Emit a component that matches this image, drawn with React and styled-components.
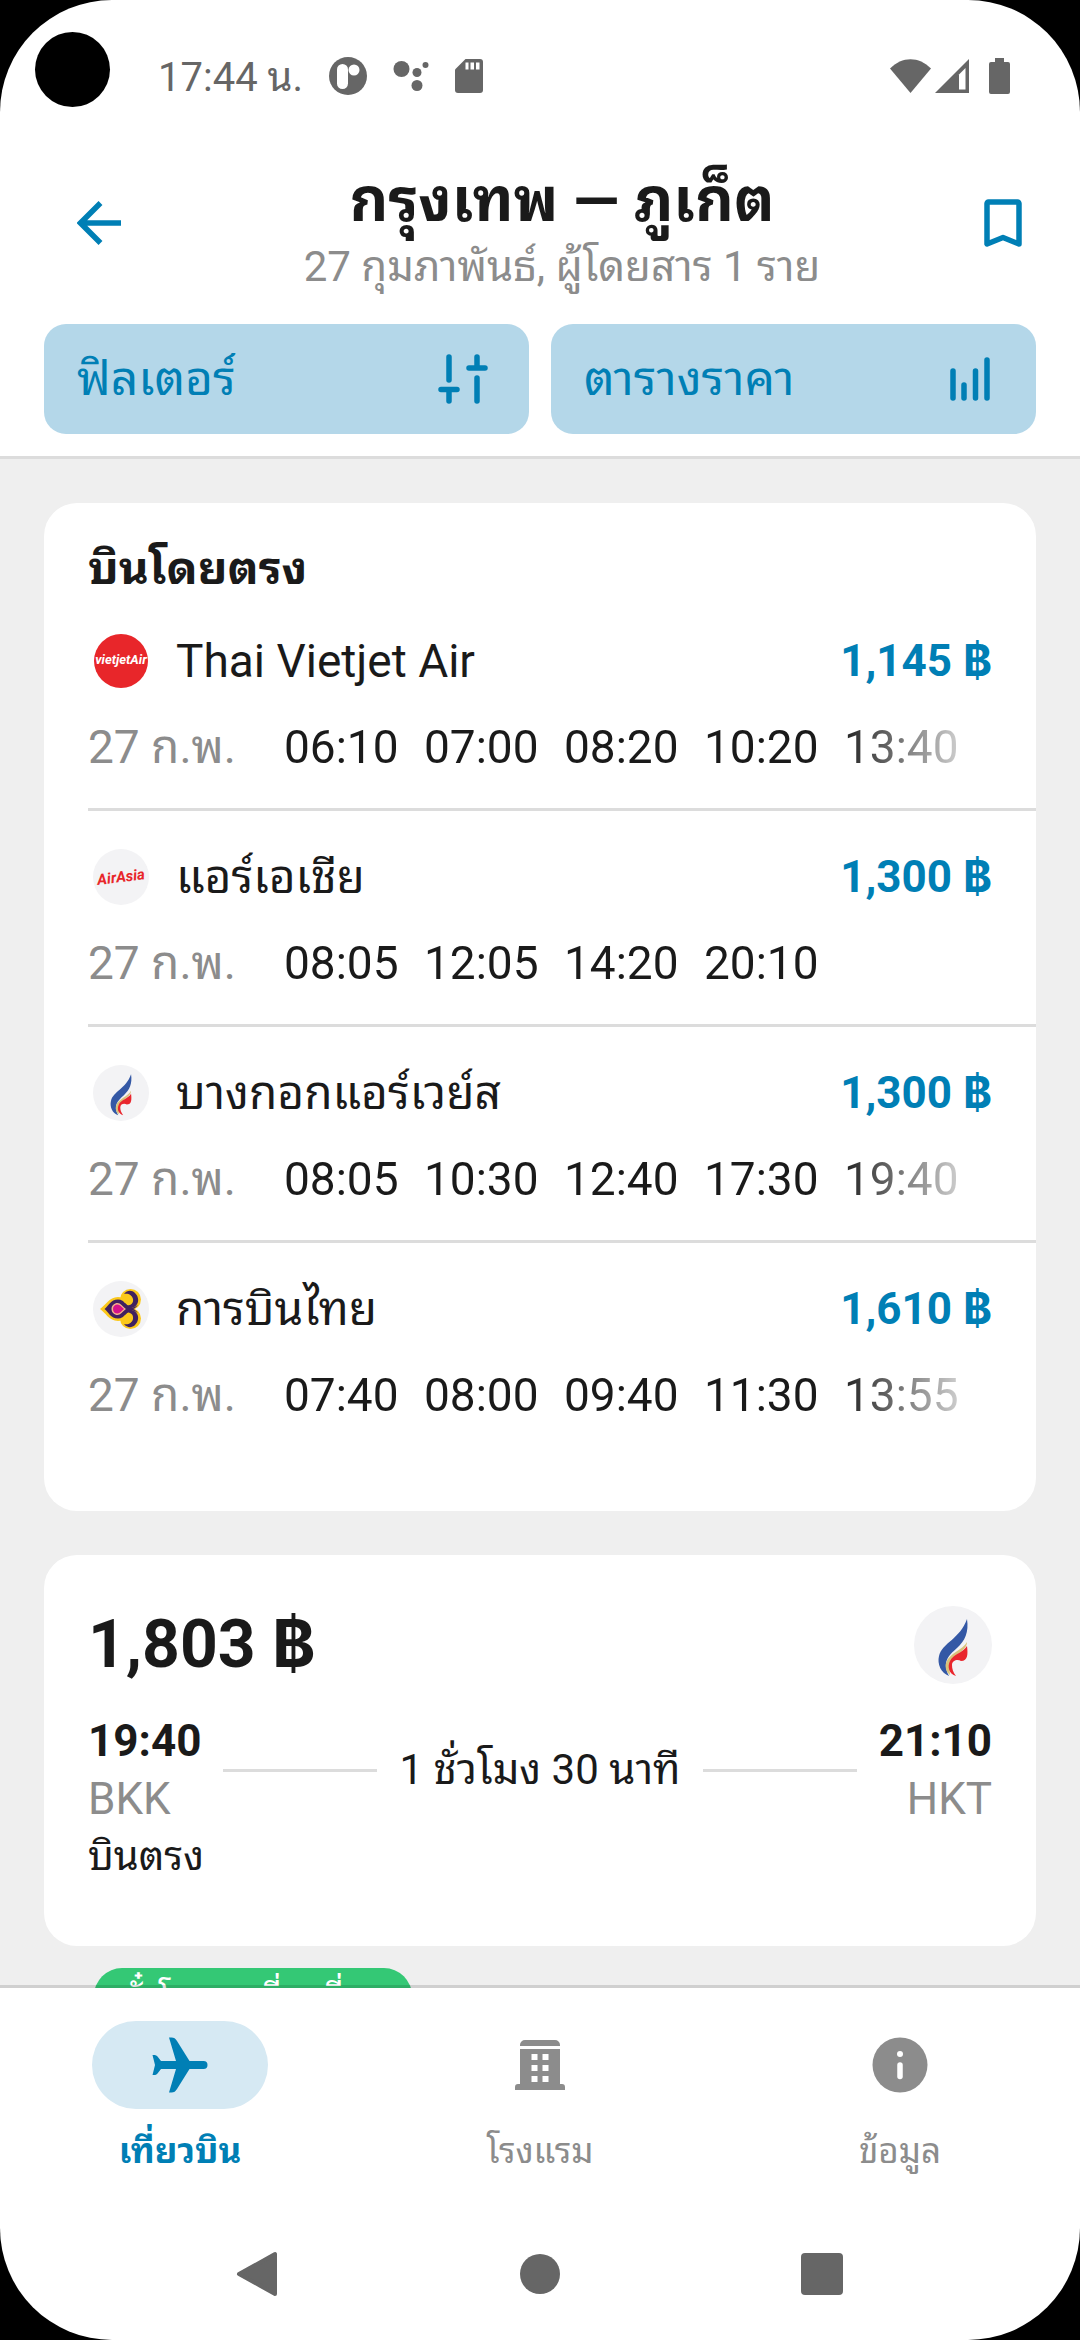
import React from "react";
import styled, { createGlobalStyle } from "styled-components";

const color = {
  blue: "#007fb5",
  blueSoft: "#b4d7e9",
  bluePale: "#d6e9f3",
  ink: "#1a1a1a",
  grey: "#8c8c8c",
  system: "#666666",
  line: "#dcdcdc",
  page: "#efefef",
  green: "#34c875",
};

const GlobalStyle = createGlobalStyle`
  * { box-sizing: border-box; }
  body {
    margin: 0;
    background: #000;
    color: ${color.ink};
    font-family: Roboto, "Noto Sans Thai Looped", Loma, Waree, Garuda, "Noto Sans Thai", "Noto Sans", sans-serif;
    font-size: 46px;
    line-height: 66px;
  }
  button {
    padding: 0;
    border: 0;
    background: none;
    color: inherit;
    font: inherit;
    cursor: pointer;
  }
  h1, h2, p, ul { margin: 0; padding: 0; }
  ul { list-style: none; }
  svg { display: block; flex: none; }
`;

const Screen = styled.div`
  position: relative;
  display: flex;
  flex-direction: column;
  height: 100vh;
  overflow: hidden;
  border-radius: 112px;
  background: #fff;
`;

const Camera = styled.span`
  position: absolute;
  top: 32px;
  left: 35px;
  width: 75px;
  height: 75px;
  border-radius: 50%;
  background: #000;
`;

const StatusBar = styled.div`
  display: flex;
  flex: none;
  align-items: center;
  justify-content: space-between;
  height: 152px;
  padding: 0 70px 0 158px;
  color: ${color.system};
`;

const StatusGroup = styled.div`
  display: flex;
  align-items: center;
  gap: ${(p) => p.$gap}px;
`;

const Clock = styled.time`
  padding-top: 4px;
  font-size: 40px;
`;

const BatterySlot = styled.span`
  padding-left: 16px;
`;

const Header = styled.header`
  flex: none;
  padding: 16px 44px 22px;
  border-bottom: 3px solid ${color.line};
`;

const TitleRow = styled.div`
  display: flex;
  align-items: flex-start;
`;

const IconButton = styled.button`
  display: flex;
  flex: none;
  align-items: center;
  justify-content: center;
  width: ${(p) => p.$width}px;
  height: 110px;
  color: ${color.blue};
`;

const TitleBlock = styled.div`
  flex: 1;
  text-align: center;
`;

const Title = styled.h1`
  font-size: 60px;
  font-weight: 700;
  line-height: 66px;
`;

const Subtitle = styled.p`
  color: ${color.grey};
  font-size: 42px;
`;

const Actions = styled.div`
  display: grid;
  grid-template-columns: 1fr 1fr;
  gap: 22px;
  margin-top: 24px;
`;

const ActionButton = styled.button`
  && {
    display: flex;
    align-items: center;
    justify-content: space-between;
    height: 110px;
    padding: 0 33px;
    border-radius: 22px;
    background: ${color.blueSoft};
    color: ${color.blue};
    font-size: 48px;
  }
`;

const Results = styled.main`
  display: flex;
  flex: 1;
  flex-direction: column;
  gap: 44px;
  min-height: 0;
  padding: 44px 44px 0;
  overflow: hidden;
  background: ${color.page};
`;

const Card = styled.section`
  flex: none;
  border-radius: 33px;
  background: #fff;
`;

const DirectCard = styled(Card)`
  padding: 38px 0 55px 44px;
`;

const CardHeading = styled.h2`
  font-size: 46px;
  font-weight: 700;
  line-height: 54px;
`;

const AirlineItem = styled.li`
  display: flex;
  flex-direction: column;
  gap: 20px;
  padding: 33px 44px 28px 0;

  & + & {
    border-top: 3px solid ${color.line};
  }
`;

const AirlineRow = styled.div`
  display: flex;
  align-items: center;
  gap: 22px;
`;

const LogoSlot = styled.span`
  display: flex;
  justify-content: center;
  width: 66px;
`;

const AirlineName = styled.span`
  flex: 1;
`;

const Price = styled.strong`
  font-family: Roboto, Inter, "Noto Sans", sans-serif;
  font-weight: 700;
`;

const AirlinePrice = styled(Price)`
  color: ${color.blue};
  font-size: 44px;
`;

const ScheduleRow = styled.div`
  display: flex;
`;

const ScheduleDate = styled.span`
  flex: none;
  width: 196px;
  color: ${color.grey};
`;

const Departures = styled.ul`
  display: flex;
  flex: 1;
  gap: 24px;
  overflow: hidden;
  mask-image: linear-gradient(to left, transparent, #000 154px);
`;

const Departure = styled.li`
  flex: none;
  width: 116px;
`;

const TicketCard = styled(Card)`
  padding: 44px 44px 60px;
`;

const TicketTop = styled.div`
  display: flex;
  align-items: center;
  justify-content: space-between;
  height: 92px;
`;

const TicketPrice = styled(Price)`
  font-size: 66px;
`;

const Route = styled.div`
  display: flex;
  align-items: center;
  gap: 22px;
  margin-top: 21px;
  line-height: 58px;
`;

const Stop = styled.div`
  display: flex;
  flex-direction: column;
  text-align: ${(p) => p.$align};
`;

const StopTime = styled.strong`
  font-size: 44px;
  font-weight: 700;
`;

const StopCode = styled.span`
  color: ${color.grey};
  font-size: 44px;
`;

const RouteLine = styled.span`
  flex: 1;
  height: 3px;
  background: ${color.line};
`;

const Duration = styled.span`
  font-size: 42px;
`;

const Transfers = styled.p`
  font-size: 40px;
  line-height: 58px;
`;

const BadgedCard = styled(Card)`
  position: relative;
  height: 392px;
`;

const Badge = styled.span`
  position: absolute;
  top: -22px;
  left: 50px;
  padding: 0 28px;
  border-radius: 28px;
  background: ${color.green};
  color: #fff;
  font-size: 33px;
  line-height: 58px;
  white-space: nowrap;
`;

const TabBar = styled.nav`
  position: relative;
  display: grid;
  flex: none;
  grid-template-columns: repeat(3, 1fr);
  margin-top: -3px;
  padding: 33px 0 34px;
  border-top: 3px solid rgba(0, 0, 0, 0.13);
  background: #fff;
  background-clip: padding-box;
`;

const Tab = styled.button`
  && {
    display: flex;
    flex-direction: column;
    align-items: center;
    gap: 21px;
    color: ${(p) => (p.$active ? color.blue : color.grey)};
    font-size: 35px;
    font-weight: ${(p) => (p.$active ? 700 : 400)};
    line-height: 44px;
  }
`;

const TabPill = styled.span`
  display: flex;
  align-items: center;
  justify-content: center;
  width: 176px;
  height: 88px;
  border-radius: 44px;
  background: ${(p) => (p.$active ? color.bluePale : "transparent")};
`;

const SystemNav = styled.div`
  display: flex;
  flex: none;
  align-items: center;
  justify-content: center;
  gap: 216px;
  height: 132px;
  color: ${color.system};
`;

const SystemButton = styled.button`
  display: flex;
  align-items: center;
  justify-content: center;
  width: 66px;
  height: 66px;
`;

const AppBadgeIcon = () => (
  <svg width="38" height="38" viewBox="0 0 38 38">
    <circle cx="19" cy="19" r="19" fill="currentColor" />
    <rect x="8" y="7" width="11" height="25" rx="5.5" fill="#fff" />
    <circle cx="25" cy="13" r="5.5" fill="#fff" />
  </svg>
);

const DotsIcon = () => (
  <svg width="36" height="36" viewBox="0 0 36 36" fill="currentColor">
    <circle cx="8.5" cy="11" r="8" />
    <circle cx="24" cy="14.5" r="4.5" />
    <circle cx="32.5" cy="7" r="3" />
    <circle cx="24" cy="27.5" r="5.5" />
  </svg>
);

const SdCardIcon = () => (
  <svg width="28" height="34" viewBox="0 0 28 34">
    <path
      d="M10.500 0H25a3 3 0 0 1 3 3v28a3 3 0 0 1-3 3H3a3 3 0 0 1-3-3V10.500Z"
      fill="currentColor"
    />
    <path d="M10.500 3.500h3v7h-3zM15.500 3.500h3.500v7h-3.500zM21 3.500h3.500v7H21z" fill="#fff" />
  </svg>
);

const WifiIcon = () => (
  <svg width="41" height="34" viewBox="0 0 41 34">
    <path d="M0 9.500C12-3 29-3 41 9.500L20.500 34Z" fill="currentColor" />
  </svg>
);

const SignalIcon = () => (
  <svg width="34" height="34" viewBox="0 0 34 34">
    <path d="M34 0v34H0Z" fill="currentColor" />
    <path d="M30.500 9v21.500H24V15.500Z" fill="#fff" />
  </svg>
);

const BatteryIcon = () => (
  <svg width="21" height="36" viewBox="0 0 21 36">
    <path
      d="M6 0h9v4h4a2 2 0 0 1 2 2v28a2 2 0 0 1-2 2H2a2 2 0 0 1-2-2V6a2 2 0 0 1 2-2h4Z"
      fill="currentColor"
    />
  </svg>
);

const BackIcon = () => (
  <svg width="44" height="44" viewBox="0 0 44 44" fill="none" stroke="currentColor" strokeWidth="5.5">
    <path d="M44 22H5M23.500 2 3.500 22l20 20" />
  </svg>
);

const BookmarkIcon = () => (
  <svg width="40" height="50" viewBox="0 0 40 50" fill="none" stroke="currentColor" strokeWidth="5.5" strokeLinejoin="round">
    <path d="M5.500 4h29a1.500 1.500 0 0 1 1.500 1.500V46L20 39.500 4 46V5.500A1.500 1.500 0 0 1 5.500 4Z" />
  </svg>
);

const FilterIcon = () => (
  <svg width="66" height="66" viewBox="0 0 66 66" fill="none" stroke="currentColor" strokeWidth="5.5" strokeLinecap="round">
    <path d="M19 11v23M11 43.500h16M19 44v11M47 11v11M39 22h16M47 32v23" />
  </svg>
);

const ChartIcon = () => (
  <svg width="66" height="66" viewBox="0 0 66 66" fill="none" stroke="currentColor" strokeWidth="5.5" strokeLinecap="round">
    <path d="M16 25v27M27 39v13M38.500 25v27M50 14v38" />
  </svg>
);

const PlaneIcon = () => (
  <svg width="56" height="56" viewBox="0 0 56 56" fill="currentColor">
    <path d="M17 0.500h2.500C22 0.500 23.500 1.500 25 4l12.500 20H51.500a4 4 0 0 1 0 8H37.500L25 52c-1.500 2.500-3 3.500-5.500 3.500H17L24 32H9l-3.500 4.500C4.500 37.500 3.500 38 2 38H0.500L3 28 0.500 18H2c1.500 0 2.500 0.500 3.500 1.500L9 24h15Z" />
  </svg>
);

const HotelIcon = () => (
  <svg width="50" height="50" viewBox="0 0 50 50">
    <path
      d="M10 0h30a5 5 0 0 1 5 5v39h2a3 3 0 0 1 3 3v3H0v-3a3 3 0 0 1 3-3h2V5a5 5 0 0 1 5-5Z"
      fill="currentColor"
    />
    <path
      d="M5 6h40v3H5zM16.500 14h6v6h-6zM27.500 14h6v6h-6zM16.500 25h6v6h-6zM27.500 25h6v6h-6zM16.500 36h6v6h-6zM27.500 36h6v6h-6z"
      fill="#fff"
    />
  </svg>
);

const InfoIcon = () => (
  <svg width="56" height="56" viewBox="0 0 56 56">
    <circle cx="28" cy="28" r="27.5" fill="currentColor" />
    <circle cx="28" cy="17" r="3" fill="#fff" />
    <path d="M28 28v11.500" stroke="#fff" strokeWidth="5.5" strokeLinecap="round" />
  </svg>
);

const VietjetLogo = () => (
  <svg width="56" height="56" viewBox="0 0 56 56" role="img" aria-label="Vietjet Air">
    <circle cx="28" cy="28" r="27" fill="#e8262a" />
    <text x="28" y="31" textAnchor="middle" fontFamily="Roboto, sans-serif" fontSize="13" fontWeight="700" fontStyle="italic" fill="#fff">
      vietjetAir
    </text>
  </svg>
);

const AirAsiaLogo = () => (
  <svg width="56" height="56" viewBox="0 0 56 56" role="img" aria-label="AirAsia">
    <circle cx="28" cy="28" r="28" fill="#f3f3f5" />
    <text x="28" y="33" textAnchor="middle" transform="rotate(-7 28 28)" fontFamily="Roboto, sans-serif" fontSize="15" fontWeight="700" fontStyle="italic" fill="#e8262a">
      AirAsia
    </text>
  </svg>
);

const BangkokAirwaysLogo = ({ size = 56 }) => (
  <svg width={size} height={size} viewBox="0 0 78 78" role="img" aria-label="Bangkok Airways">
    <circle cx="39" cy="39" r="39" fill="#f3f3f5" />
    <path d="M53 13c2 13-2 22-10 29-9 8-15 14-8 28C27 67 23 58 25 50c3-13 21-17 28-37Z" fill="#3458a5" />
    <path d="M53 36c-4 8-18 11-21 21-1 4 0 9 4 12-1-11 1-16 8-21 5-4 9-7 9-12Z" fill="#d9c27a" />
    <path d="M53 40c1 8 1 15-6 15-3-2-9-1-9 4 0 4 1 7 4 11-7-2-9-9-6-15 3-7 13-8 17-15Z" fill="#e9262d" />
  </svg>
);

const ThaiAirwaysLogo = () => (
  <svg width="56" height="56" viewBox="0 0 56 56" role="img" aria-label="Thai Airways">
    <circle cx="28" cy="28" r="28" fill="#f3f3f5" />
    <g fill="#fbc81b">
      <circle cx="37.5" cy="18.5" r="10.5" />
      <circle cx="37.5" cy="37.5" r="10.5" />
      <path d="M7 28c5-3 9-12 18-12 6 0 11 6 15 12-4 6-9 12-15 12-9 0-13-9-18-12Z" />
    </g>
    <g fill="#40215f">
      <path d="M11.500 28c4-3 6-9.500 13.500-9.500 7 0 9 8 14 8 2 0 4-1 6-3-2 4-5 5-8 5h-5v-1c-3-1-4-4.500-7-4.500s-5 2-5 5 2 5 5 5 4-3.500 7-4.500v-1h5c3 0 6 1 8 5-2-2-4-3-6-3-5 0-7 8-14 8-7.500 0-9.500-6.500-13.500-9.500Z" />
      <path d="M31 13c3-4 8-4 11-1 6 6 3 15-5 15-4 0-6-1-8-4 6 3 12 1 11-5-1-4-5-6-9-5ZM31 43c3 4 8 4 11 1 6-6 3-15-5-15-4 0-6 1-8 4 6-3 12-1 11 5-1 4-5 6-9 5Z" />
    </g>
    <circle cx="34.5" cy="18" r="4.5" fill="#fbc81b" />
    <circle cx="34.5" cy="38" r="4.5" fill="#fbc81b" />
    <path d="M51 28 43 27.500v1Z" fill="#f3f3f5" />
    <path d="M18.500 28c0-3.500 3-6 6-6s5 3.500 8.500 6c-3.500 2.500-5.500 6-8.500 6s-6-2.500-6-6Z" fill="#f4b08a" />
    <path d="M20 28c0-3 2-4.500 4.500-4.500S28.500 26 31 28c-2.500 2-4 4.500-6.500 4.500S20 31 20 28Z" fill="#d6128a" />
  </svg>
);

const BackTriangleIcon = () => (
  <svg width="66" height="66" viewBox="0 0 66 66" fill="currentColor" stroke="currentColor" strokeWidth="4" strokeLinejoin="round">
    <path d="M50 13v40L14 33Z" />
  </svg>
);

const HomeCircleIcon = () => (
  <svg width="40" height="40" viewBox="0 0 40 40">
    <circle cx="20" cy="20" r="20" fill="currentColor" />
  </svg>
);

const RecentSquareIcon = () => (
  <svg width="42" height="42" viewBox="0 0 42 42">
    <rect width="42" height="42" rx="4" fill="currentColor" />
  </svg>
);

const airlines = [
  {
    name: "Thai Vietjet Air",
    price: "1,145 ฿",
    Logo: VietjetLogo,
    times: ["06:10", "07:00", "08:20", "10:20", "13:40"],
  },
  {
    name: "แอร์เอเชีย",
    price: "1,300 ฿",
    Logo: AirAsiaLogo,
    times: ["08:05", "12:05", "14:20", "20:10"],
  },
  {
    name: "บางกอกแอร์เวย์ส",
    price: "1,300 ฿",
    Logo: BangkokAirwaysLogo,
    times: ["08:05", "10:30", "12:40", "17:30", "19:40"],
  },
  {
    name: "การบินไทย",
    price: "1,610 ฿",
    Logo: ThaiAirwaysLogo,
    times: ["07:40", "08:00", "09:40", "11:30", "13:55"],
  },
];

const tabs = [
  { label: "เที่ยวบิน", Icon: PlaneIcon, active: true },
  { label: "โรงแรม", Icon: HotelIcon, active: false },
  { label: "ข้อมูล", Icon: InfoIcon, active: false },
];

export default function App() {
  return (
    <Screen lang="th">
      <GlobalStyle />
      <Camera />
      <StatusBar>
        <StatusGroup $gap={26}>
          <Clock>17:44 น.</Clock>
          <AppBadgeIcon />
          <DotsIcon />
          <SdCardIcon />
        </StatusGroup>
        <StatusGroup $gap={4}>
          <WifiIcon />
          <SignalIcon />
          <BatterySlot>
            <BatteryIcon />
          </BatterySlot>
        </StatusGroup>
      </StatusBar>

      <Header>
        <TitleRow>
          <IconButton $width={110} aria-label="ย้อนกลับ">
            <BackIcon />
          </IconButton>
          <TitleBlock>
            <Title>กรุงเทพ — ภูเก็ต</Title>
            <Subtitle>27 กุมภาพันธ์, ผู้โดยสาร 1 ราย</Subtitle>
          </TitleBlock>
          <IconButton $width={66} aria-label="บันทึก">
            <BookmarkIcon />
          </IconButton>
        </TitleRow>
        <Actions>
          <ActionButton>
            ฟิลเตอร์
            <FilterIcon />
          </ActionButton>
          <ActionButton>
            ตารางราคา
            <ChartIcon />
          </ActionButton>
        </Actions>
      </Header>

      <Results>
        <DirectCard>
          <CardHeading>บินโดยตรง</CardHeading>
          <ul>
            {airlines.map(({ name, price, Logo, times }) => (
              <AirlineItem key={name}>
                <AirlineRow>
                  <LogoSlot>
                    <Logo />
                  </LogoSlot>
                  <AirlineName>{name}</AirlineName>
                  <AirlinePrice>{price}</AirlinePrice>
                </AirlineRow>
                <ScheduleRow>
                  <ScheduleDate>27 ก.พ.</ScheduleDate>
                  <Departures>
                    {times.map((time) => (
                      <Departure key={time}>{time}</Departure>
                    ))}
                  </Departures>
                </ScheduleRow>
              </AirlineItem>
            ))}
          </ul>
        </DirectCard>

        <TicketCard>
          <TicketTop>
            <TicketPrice>1,803 ฿</TicketPrice>
            <BangkokAirwaysLogo size={78} />
          </TicketTop>
          <Route>
            <Stop $align="left">
              <StopTime>19:40</StopTime>
              <StopCode>BKK</StopCode>
            </Stop>
            <RouteLine />
            <Duration>1 ชั่วโมง 30 นาที</Duration>
            <RouteLine />
            <Stop $align="right">
              <StopTime>21:10</StopTime>
              <StopCode>HKT</StopCode>
            </Stop>
          </Route>
          <Transfers>บินตรง</Transfers>
        </TicketCard>

        <BadgedCard>
          <Badge>ตั๋วโดยสารที่ถูกที่สุด</Badge>
        </BadgedCard>
      </Results>

      <TabBar>
        {tabs.map(({ label, Icon, active }) => (
          <Tab key={label} $active={active}>
            <TabPill $active={active}>
              <Icon />
            </TabPill>
            {label}
          </Tab>
        ))}
      </TabBar>

      <SystemNav>
        <SystemButton aria-label="กลับ">
          <BackTriangleIcon />
        </SystemButton>
        <SystemButton aria-label="หน้าแรก">
          <HomeCircleIcon />
        </SystemButton>
        <SystemButton aria-label="แอปล่าสุด">
          <RecentSquareIcon />
        </SystemButton>
      </SystemNav>
    </Screen>
  );
}
